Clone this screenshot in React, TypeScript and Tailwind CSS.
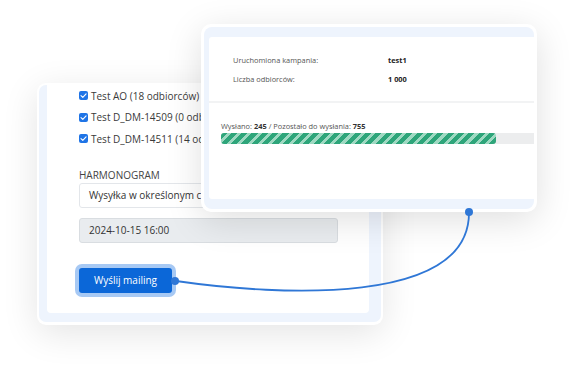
import React from "react";

function Check() {
  return (
    <span className="flex h-[9px] w-[9px] shrink-0 items-center justify-center rounded-[2px] bg-[#1f74e6]">
      <svg width="9" height="9" viewBox="0 0 9 9">
        <path d="M2 4.7 L3.8 6.4 L7.1 2.8" fill="none" stroke="white" strokeWidth="1.1" strokeLinecap="round" strokeLinejoin="round" />
      </svg>
    </span>
  );
}

function Row({ label }: { label: string }) {
  return (
    <div className="flex h-[21.5px] items-center gap-[3px] whitespace-nowrap">
      <Check />
      <span className="text-[10px] leading-none text-[#3a3a3a]">{label}</span>
    </div>
  );
}

export default function App() {
  return (
    <div
      className="relative h-[374px] w-[573px] overflow-hidden bg-white"
      style={{ fontFamily: '"Open Sans", "Noto Sans", sans-serif' }}
    >
      {/* Left card */}
      <div className="absolute left-[37px] top-[83px] flex h-[242px] w-[346px] rounded-[9px] bg-white px-[2px] pb-[3px] pt-[2px] shadow-[0_8px_36px_rgba(0,0,0,0.11)]">
        <div className="flex flex-1 rounded-[7px] bg-[#eef4fd] pb-[9px] pl-[8px] pr-[12px]">
          <div className="flex flex-1 flex-col overflow-hidden rounded-b-[4px] bg-white pl-[32px]">
            <Row label="Test AO (18 odbiorców)" />
            <Row label="Test D_DM-14509 (0 odbiorców)" />
            <Row label="Test D_DM-14511 (14 odbiorców)" />
            <div className="mt-[18.5px] flex h-[14px] items-center text-[10px] leading-none text-[#444]">
              HARMONOGRAM
            </div>
            <div className="mt-[1px] flex h-[25px] w-[259px] items-center whitespace-nowrap rounded-[3px] border border-[#e3e6ea] bg-white pl-[9px] text-[10px] text-[#333]">
              Wysyłka w określonym czasie
            </div>
            <div className="mt-[10px] flex h-[25px] w-[259px] items-center rounded-[3px] border border-[#d9dde1] bg-[#e9ecef] pl-[9px] text-[10px] text-[#333]">
              2024-10-15 16:00
            </div>
            <div className="mt-[25px] flex h-[25px] w-[93px] items-center justify-center rounded-[3px] bg-[#0b67d8] text-[10px] font-medium text-white ring-4 ring-[#a7c9f4]">
              Wyślij mailing
            </div>
          </div>
        </div>
      </div>

      {/* Right card */}
      <div className="absolute left-[201px] top-[24px] flex h-[188px] w-[336px] rounded-[10px] bg-white p-[3px] shadow-[0_8px_36px_rgba(0,0,0,0.13)]">
        <div className="flex flex-1 rounded-[8px] bg-[#eef4fd] pb-[10px] pl-[5px] pt-[10px]">
          <div className="flex flex-1 flex-col rounded-l-[3px] bg-white">
            <div className="flex flex-col pb-[11.5px] pl-[24px] pt-[14.5px] text-[7.4px]">
              <div className="flex h-[19px] items-center">
                <span className="w-[155px] text-[#555]">Uruchomiona kampania:</span>
                <span className="font-bold text-[#222]">test1</span>
              </div>
              <div className="flex h-[19px] items-center">
                <span className="w-[155px] text-[#555]">Liczba odbiorców:</span>
                <span className="font-bold text-[#222]">1 000</span>
              </div>
            </div>
            <div className="h-[2px] bg-[#f2f3f4]" />
            <div className="flex flex-col pl-[12px] pt-[19px]">
              <div className="flex h-[10px] items-center gap-[2px] whitespace-nowrap text-[7.4px] leading-none text-[#555]">
                <span>Wysłano:</span>
                <span className="font-bold text-[#333]">245</span>
                <span>/ Pozostało do wysłania:</span>
                <span className="font-bold text-[#333]">755</span>
              </div>
              <div className="mt-[1px] flex h-[11px] rounded-l-[3px] bg-[#ecedee]">
                <div className="h-full w-[275px] rounded-[3px] bg-[repeating-linear-gradient(135deg,#2ea57a_0px,#2ea57a_4.3px,#9fd9c2_4.3px,#9fd9c2_7.3px)]" />
              </div>
            </div>
          </div>
        </div>
      </div>

      {/* Connector */}
      <svg className="pointer-events-none absolute left-0 top-0" width="573" height="374" viewBox="0 0 573 374">
        <path d="M176 281 C 280 296, 470 306, 469 212" fill="none" stroke="#2f77d6" strokeWidth="1.8" />
        <circle cx="175" cy="281" r="4" fill="#2f77d6" />
        <circle cx="469" cy="212" r="4" fill="#2f77d6" />
      </svg>
    </div>
  );
}
